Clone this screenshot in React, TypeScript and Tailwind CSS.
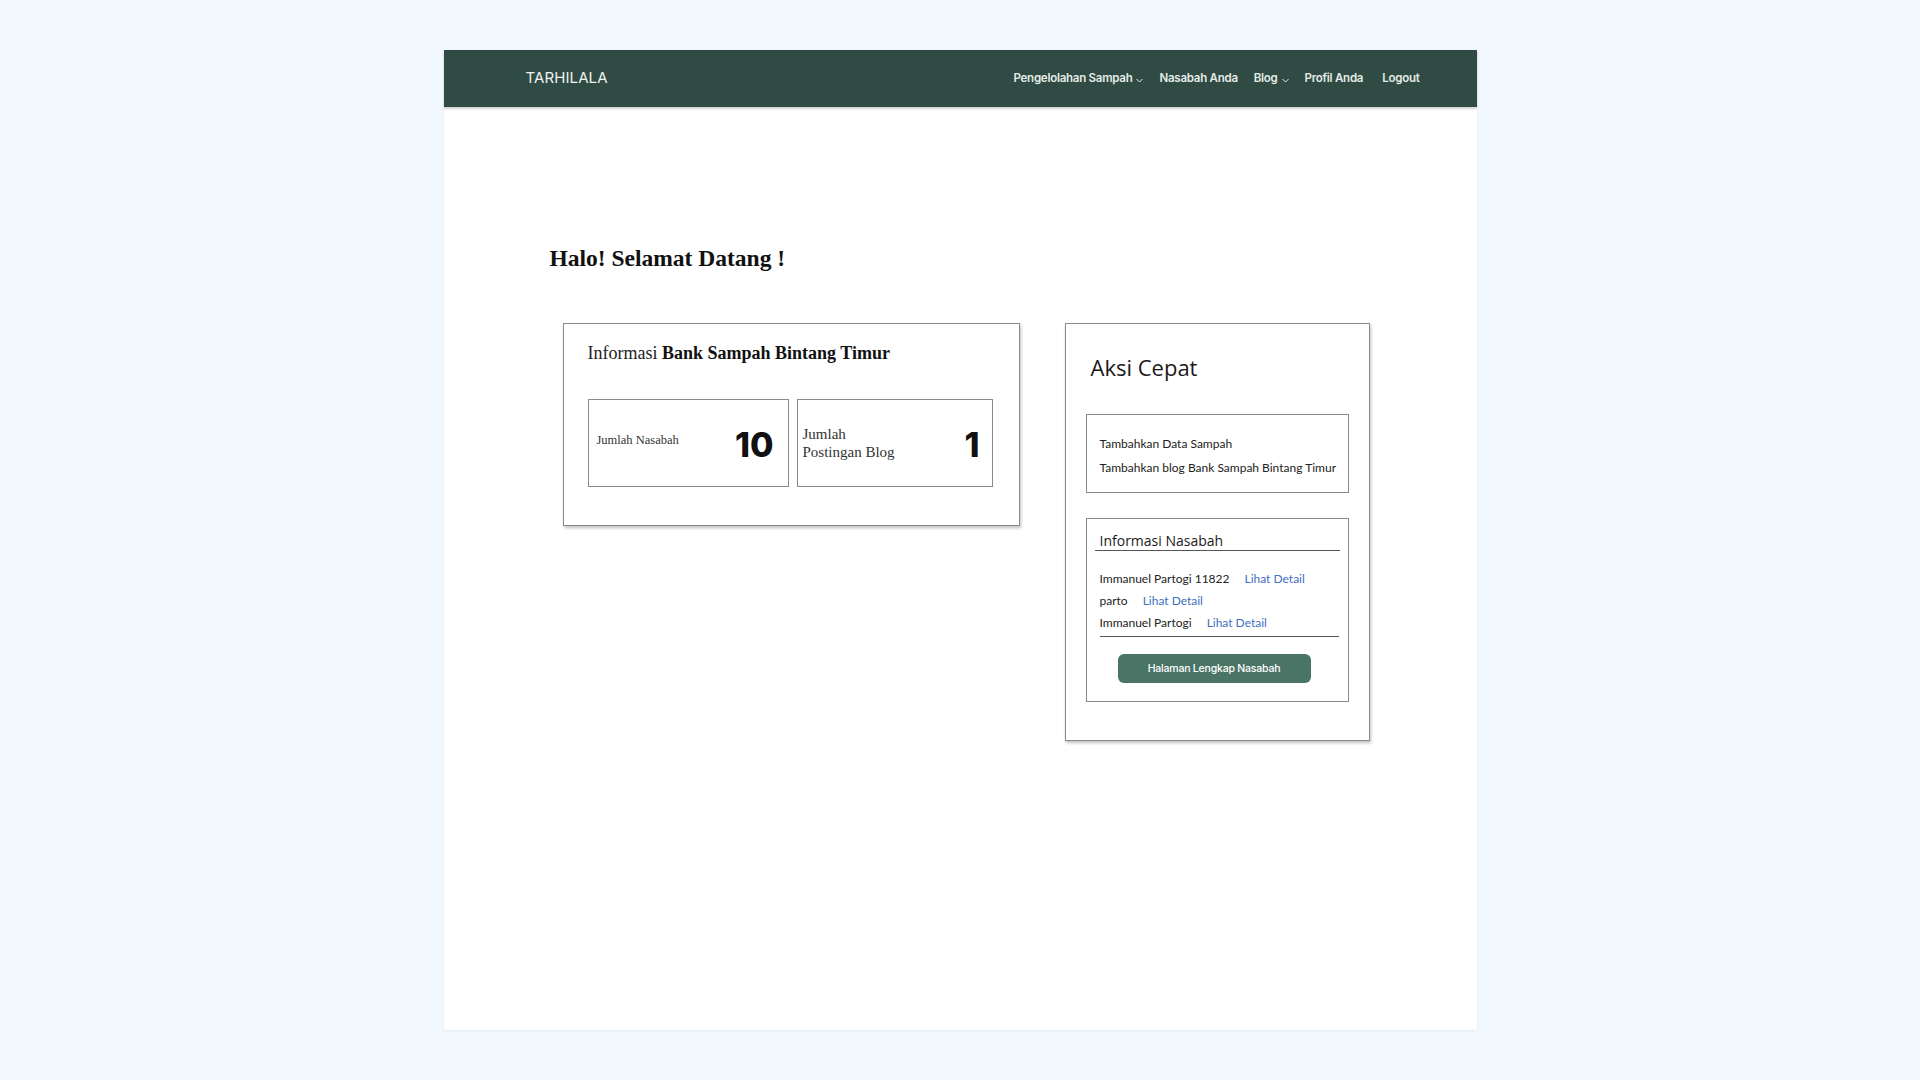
const navItems = [
  { label: 'Pengelolahan Sampah', dropdown: true },
  { label: 'Nasabah Anda', dropdown: false },
  { label: 'Blog', dropdown: true },
  { label: 'Profil Anda', dropdown: false },
  { label: 'Logout', dropdown: false },
];

const nasabah = ['Immanuel Partogi 11822', 'parto', 'Immanuel Partogi'];

const Chevron = () => (
  <svg width="7" height="5" viewBox="0 0 7 5" className="ml-[4px] mt-[3px]">
    <polyline points="0.5,1 3.5,4 6.5,1" fill="none" stroke="currentColor" strokeWidth="1" />
  </svg>
);

const StatBox = ({ label, value, wide }: { label: React.ReactNode; value: string; wide?: boolean }) => (
  <div
    className={`flex items-center justify-between border-[1.5px] border-[#8a8a8a] h-[88px] ${
      wide ? 'w-[201px] pl-[8px] pr-[14px]' : 'w-[196px] pl-[5px] pr-[12px]'
    }`}
  >
    {label}
    <span className="font-['Inter',sans-serif] font-extrabold text-[34px] leading-none text-[#111] mt-[4px]">
      {value}
    </span>
  </div>
);

export default function App() {
  return (
    <div className="min-h-screen bg-[#f0f7fd] pt-[50px] pb-[50px]">
      <div className="mx-auto w-[1033px] h-[980px] bg-white shadow-[0_1px_2px_rgba(0,0,0,0.06)]">
        {/* Navbar */}
        <nav className="h-[57px] bg-[#2f4b43] flex items-center justify-between pl-[82px] pr-[57px] shadow-[0_2px_2px_rgba(0,0,0,0.18)]">
          <span className="font-['Inter',sans-serif] text-[15px] text-[#eef2f0] tracking-[0.1px]">TARHILALA</span>
          <ul className="flex items-center gap-[16px] font-['Inter',sans-serif] text-[11.5px] font-semibold tracking-[-0.25px] text-[#e6ebe8]">
            {navItems.map((item) => (
              <li key={item.label} className={`flex items-center ${item.label === 'Logout' ? 'ml-[3px]' : ''}`}>
                {item.label}
                {item.dropdown && <Chevron />}
              </li>
            ))}
          </ul>
        </nav>

        {/* Content */}
        <div className="pl-[106px]">
          <h1 className="mt-[135px] font-['Liberation_Serif',serif] font-bold text-[23.5px] leading-[32px] text-[#111]">
            Halo! Selamat Datang !
          </h1>

          <div className="flex items-start gap-[45px] ml-[13px] mt-[49px]">
            {/* Info card */}
            <div className="w-[457px] border-[1.5px] border-[#8a8a8a] shadow-[1px_2px_3px_rgba(0,0,0,0.25)] pt-[17px] pl-[24px] pb-[38px]">
              <h2 className="font-['Liberation_Serif',serif] text-[18px] leading-[24px] text-[#222]">
                Informasi <span className="font-bold text-[#111]">Bank Sampah Bintang Timur</span>
              </h2>
              <div className="flex gap-[8px] mt-[34px]">
                <StatBox
                  wide
                  value="10"
                  label={
                    <span className="font-['Liberation_Serif',serif] text-[12.5px] text-[#333] mb-[6px]">Jumlah Nasabah</span>
                  }
                />
                <StatBox
                  value="1"
                  label={
                    <span className="font-['Liberation_Serif',serif] text-[15px] leading-[18px] text-[#333]">
                      Jumlah
                      <br />
                      Postingan Blog
                    </span>
                  }
                />
              </div>
            </div>

            {/* Aksi cepat */}
            <div className="w-[305px] border-[1.5px] border-[#8a8a8a] shadow-[1px_2px_3px_rgba(0,0,0,0.25)] pt-[29px] px-[20px] pb-[38px]">
              <h2 className="pl-[5px] font-['Open_Sans',sans-serif] text-[22px] leading-[28px] text-[#1a1a1a]">Aksi Cepat</h2>

              <div className="mt-[33px] h-[79px] border-[1.5px] border-[#8a8a8a] pt-[17px] pl-[13px] font-['Lato',sans-serif] text-[12px] leading-[24px] text-[#222]">
                <p>Tambahkan Data Sampah</p>
                <p>Tambahkan blog Bank Sampah Bintang Timur</p>
              </div>

              <div className="mt-[25px] border-[1.5px] border-[#8a8a8a] pt-[13px] pb-[18px]">
                <div className="mx-[8px] border-b-[1.5px] border-[#555]">
                  <h3 className="pl-[5px] font-['Open_Sans',sans-serif] text-[14px] leading-[18px] text-[#1a1a1a]">
                    Informasi Nasabah
                  </h3>
                </div>
                <ul className="ml-[13px] mr-[9px] mt-[17px] pb-[2px] border-b-[1.5px] border-[#555] font-['Lato',sans-serif] text-[12px] leading-[22px] text-[#222]">
                  {nasabah.map((n) => (
                    <li key={n} className="flex gap-[15px]">
                      <span>{n}</span>
                      <a href="#" className="text-[#3f6fc0]">Lihat Detail</a>
                    </li>
                  ))}
                </ul>
                <button className="ml-[31px] mt-[17px] w-[193px] h-[29px] rounded-[6px] bg-[#4a7566] text-white font-['Inter',sans-serif] text-[10.5px] font-medium tracking-[-0.2px]">
                  Halaman Lengkap Nasabah
                </button>
              </div>
            </div>
          </div>
        </div>
      </div>
    </div>
  );
}
